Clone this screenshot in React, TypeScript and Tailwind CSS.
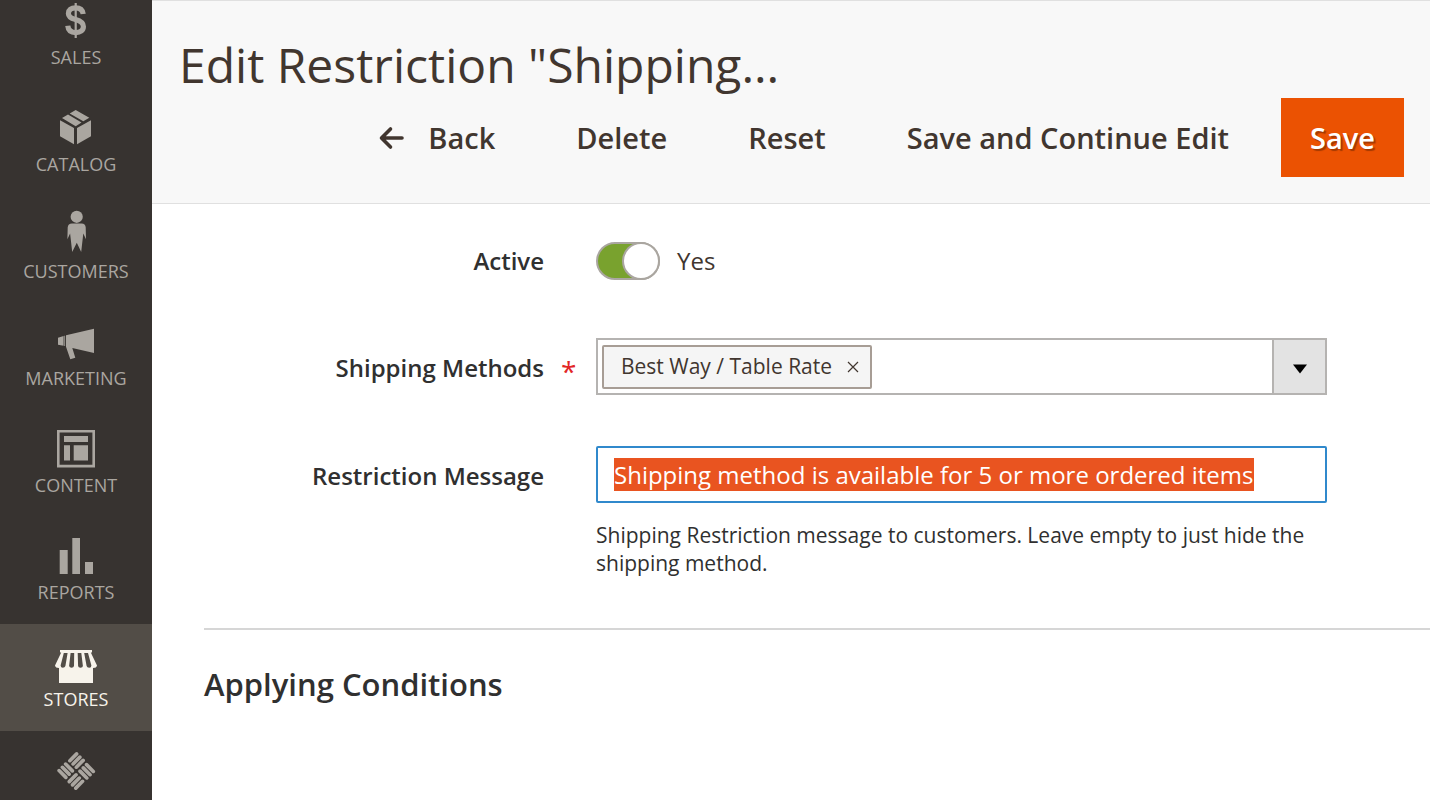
import React, { useEffect, useRef, useState } from "react";

interface NavItem {
	label: string;
	icon: React.ReactNode;
	active?: boolean;
}

const navItems: NavItem[] = [
	{
		label: "Sales",
		icon: (
			<>
				<path
					d="M29.2 15C28.6 10.8 26 8.9 21.6 8.9C17 8.9 14.4 11 14.4 14.4C14.4 18 17.4 19.4 21.6 20.5C26.4 21.8 29.4 23.6 29.4 27.6C29.4 31.4 26.4 33.6 21.8 33.6C17 33.6 14.2 31.6 13.8 26.8"
					fill="none"
					stroke="currentColor"
					strokeWidth="5.2"
				/>
				<path d="M20.6 4h2.2v35h-2.2z" />
			</>
		),
	},
	{
		label: "Catalog",
		icon: (
			<path d="M21.7 4L35.3 11.7L29.3 15.3L15.7 7.6zM14 8.6L27.5 16.4L21.7 20.3L8 12zM6 14.3L20 22V38.3L6 30.3zM37 14.3L23 22V38.3L37 30.3z" />
		),
	},
	{
		label: "Customers",
		icon: (
			<>
				<circle cx="22.7" cy="3.8" r="6.1" />
				<path d="M18 10.4H27.6Q31.4 10.6 31.7 14.3L32 26.3L29.3 20.6L27.2 39L22.8 29.7L18.2 39L16.1 20.6L13.4 26.3L13.7 14.3Q14 10.6 18 10.4z" />
			</>
		),
	},
	{
		label: "Marketing",
		icon: (
			<path d="M4 17.7L9.6 16V25.8L4 24.7zM10.3 15.8h.8V26h-.8zM12 15.3L40 8.7V33L18.3 28L21.3 37.7L16.3 39.3L12 26.7z" />
		),
	},
	{
		label: "Content",
		icon: (
			<>
				<path d="M4.3 4.3h35.4v34.8H4.3z" fill="none" stroke="currentColor" strokeWidth="2.6" />
				<path d="M10 9h24v6H10zM10 18.3h6v15.3h-6zM19.7 18.3H34v15.3H19.7z" />
			</>
		),
	},
	{
		label: "Reports",
		icon: <path d="M5.7 16h8v24h-8zM18.3 4H26v36h-7.7zM31 28h8v12h-8z" />,
	},
	{
		label: "Stores",
		active: true,
		icon: (
			<>
				<path d="M6 9h32v2.4h-1.2L43 24.5Q42.6 27 39 27V42H5V27Q1.4 27 1 24.5L7.2 11.4H6z" />
				<path
					d="M9.8 12h3.8l-2.2 13q-.6 1.8-2.6 1.8t-2.2-2.2zM16.6 12h3.6l-.2 13q-.4 1.8-2.4 1.8T15.1 25zM23.7 12h3.6l1.6 13q-.2 1.8-2.4 1.8t-2.4-1.8zM30.2 12h3.8l3.4 12.6q0 2.2-2.2 2.2t-2.6-1.8z"
					className="fill-[#524d47]"
				/>
			</>
		),
	},
];

const NavIcon = ({ children }: { children: React.ReactNode }) => (
	<svg viewBox="0 0 44 44" className="h-11 w-11 shrink-0 overflow-visible" fill="currentColor" aria-hidden="true">
		{children}
	</svg>
);

const Sidebar = () => (
	<aside className="w-[152px] shrink-0 overflow-hidden bg-[#373330]">
		<nav>
			{navItems.map(({ label, icon, active }, i) => (
				<a
					key={label}
					href="#"
					className={`flex flex-col items-center justify-end gap-[2px] pb-5 text-lg leading-6 uppercase ${
						i === 0 ? "h-[89px]" : "h-[107px]"
					} ${active ? "bg-[#524d47] text-[#f7f3eb]" : "text-[#aaa6a0]"}`}
				>
					<NavIcon>{icon}</NavIcon>
					{label}
				</a>
			))}
			<a href="#" aria-label="Extensions" className="flex justify-center pt-[17px] text-[#aaa6a0]">
				<NavIcon>
					<path
						d="M-11.8 -12.4V-2.8M-7.2 -12.4V-2.8M-2.6 -12.4V-2.8M2.8 -11.8H12.4M2.8 -7.2H12.4M2.8 -2.6H12.4M-12.4 2.6H-2.8M-12.4 7.2H-2.8M-12.4 11.8H-2.8M2.6 2.8V12.4M7.2 2.8V12.4M11.8 2.8V12.4"
						transform="translate(22.2 23) rotate(45)"
						fill="none"
						stroke="currentColor"
						strokeWidth="3.6"
						strokeLinecap="round"
					/>
				</NavIcon>
			</a>
		</nav>
	</aside>
);

const Header = () => (
	<header className="border-y border-[#e0e0e0] bg-[#f8f8f8] pr-[26px] pb-[26px] pl-[27px]">
		<h1 className="truncate pt-[31px] text-5xl leading-[66px] text-[#41362f]">
			Edit Restriction "Shipping...
		</h1>
		<div className="flex items-center justify-end gap-[23px] text-[29px] font-semibold text-[#41362f]">
			<button className="flex h-[79px] items-center gap-6 px-[29px]">
				<svg viewBox="0 0 26 26" className="h-[26px] w-[26px]" aria-hidden="true">
					<path
						d="M12.5 4L3.5 13L12.5 22M4 13H24"
						fill="none"
						stroke="currentColor"
						strokeWidth="3.6"
						strokeLinecap="round"
						strokeLinejoin="round"
					/>
				</svg>
				Back
			</button>
			<button className="h-[79px] px-[29px]">Delete</button>
			<button className="h-[79px] px-[29px]">Reset</button>
			<button className="h-[79px] px-[29px]">Save and Continue Edit</button>
			<button className="h-[79px] bg-[#eb5202] px-[29px] text-white [text-shadow:2px_2px_1px_rgba(0,0,0,0.3)]">
				Save
			</button>
		</div>
	</header>
);

interface FieldProps {
	id: string;
	label: string;
	required?: boolean;
	children: React.ReactNode;
}

const Field = ({ id, label, required, children }: FieldProps) => (
	<div className="flex">
		<label htmlFor={id} className="w-[340px] shrink-0 text-right text-2xl leading-[60px] font-semibold text-[#303030]">
			{label}
		</label>
		<span className="w-[52px] shrink-0 pt-[6px] pl-[17px] text-[28px] leading-[55px] font-medium text-[#e22626]">
			{required && "*"}
		</span>
		<div className="min-w-0 flex-1">{children}</div>
	</div>
);

const App = () => {
	const [active, setActive] = useState<boolean>(true);
	const [methods, setMethods] = useState<string[]>(["Best Way / Table Rate"]);
	const [message, setMessage] = useState<string>("Shipping method is available for 5 or more ordered items");
	const messageRef = useRef<HTMLInputElement>(null);

	useEffect(() => {
		messageRef.current?.focus();
		messageRef.current?.select();
	}, []);

	return (
		<div className="flex h-screen overflow-hidden bg-white font-['Open_Sans',sans-serif]">
			<Sidebar />
			<div className="min-w-0 flex-1">
				<Header />
				<main className="pl-[52px]">
					<div className="flex flex-col gap-[47px] pt-[27px] pr-[103px] pb-[51px]">
						<Field id="active" label="Active">
							<div className="flex h-[60px] items-center gap-[17px] text-2xl text-[#41362f]">
								<span className="relative h-[38px] w-16">
									<input
										id="active"
										type="checkbox"
										role="switch"
										checked={active}
										onChange={(e) => setActive(e.target.checked)}
										className="peer h-[38px] w-16 appearance-none rounded-full border-2 border-[#aaa6a0] bg-[#e3e3e3] outline-none checked:bg-[#79a22e]"
									/>
									<span className="pointer-events-none absolute top-0 left-0 h-[38px] w-[38px] rounded-full border-2 border-[#aaa6a0] bg-white peer-checked:right-0 peer-checked:left-auto" />
								</span>
								{active ? "Yes" : "No"}
							</div>
						</Field>
						<Field id="methods" label="Shipping Methods" required>
							<div className="flex h-[57px] border-2 border-[#b5b3b1]">
								<div className="flex flex-1 items-center px-1">
									{methods.map((method) => (
										<span
											key={method}
											className="flex h-11 items-center gap-[15px] rounded-[2px] border-2 border-[#a79d95] bg-[#f5f5f5] pr-[11px] pl-[17px] text-[21px] text-[#41362f]"
										>
											{method}
											<button
												aria-label={`Remove ${method}`}
												onClick={() => setMethods(methods.filter((m) => m !== method))}
											>
												<svg viewBox="0 0 12 12" className="h-3 w-3">
													<path d="M1 1L11 11M11 1L1 11" fill="none" stroke="currentColor" strokeWidth="1.2" />
												</svg>
											</button>
										</span>
									))}
								</div>
								<button
									id="methods"
									className="flex w-[53px] items-center justify-center border-l-2 border-[#b5b3b1] bg-[#e3e3e3]"
								>
									<svg viewBox="0 0 14 10" className="mt-1 h-[10px] w-[14px]" aria-hidden="true">
										<path d="M0 .5H14L7 9.5z" fill="black" />
									</svg>
								</button>
							</div>
						</Field>
						<Field id="message" label="Restriction Message">
							<input
								id="message"
								ref={messageRef}
								type="text"
								value={message}
								onChange={(e) => setMessage(e.target.value)}
								className="h-[57px] w-full rounded-[2px] border-2 border-[#3089cc] px-4 text-2xl text-[#303030] outline-none selection:bg-[#e95420] selection:text-white"
							/>
							<p className="pt-[18px] text-[21px] leading-7 text-[#303030]">
								Shipping Restriction message to customers. Leave empty to just hide the shipping method.
							</p>
						</Field>
					</div>
					<section className="border-t-2 border-[#d6d6d6] pt-8">
						<h2 className="text-[31px] leading-[44px] font-semibold text-[#303030]">Applying Conditions</h2>
					</section>
				</main>
			</div>
		</div>
	);
};

export default App;
